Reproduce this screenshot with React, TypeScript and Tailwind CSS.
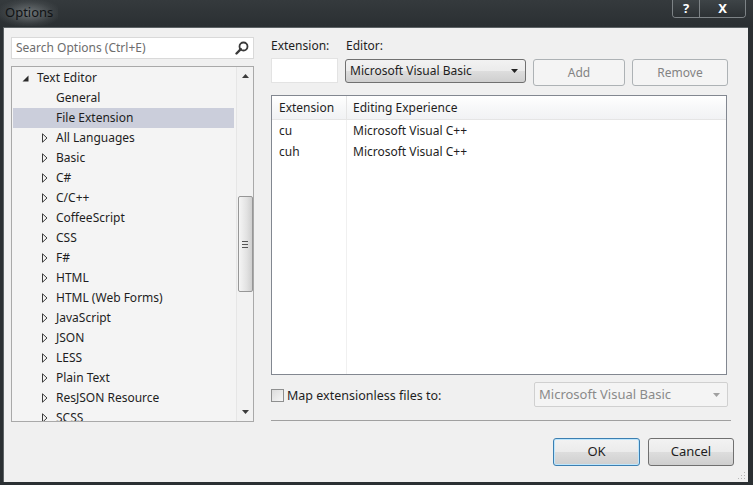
import React from 'react';

const treeItems = [
  'All Languages',
  'Basic',
  'C#',
  'C/C++',
  'CoffeeScript',
  'CSS',
  'F#',
  'HTML',
  'HTML (Web Forms)',
  'JavaScript',
  'JSON',
  'LESS',
  'Plain Text',
  'ResJSON Resource',
  'SCSS',
];

const mappings = [
  { ext: 'cu', editor: 'Microsoft Visual C++' },
  { ext: 'cuh', editor: 'Microsoft Visual C++' },
];

const Collapsed = () => (
  <svg width="6" height="10" viewBox="0 0 6 10" className="shrink-0">
    <path d="M0.5 0.8 L5 5 L0.5 9.2 Z" fill="none" stroke="#3c3c3c" strokeWidth="1" />
  </svg>
);

const Expanded = () => (
  <svg width="7" height="7" viewBox="0 0 7 7" className="shrink-0">
    <path d="M6.5 0.5 L6.5 6.5 L0.5 6.5 Z" fill="#2a2a2a" />
  </svg>
);

const ComboArrow = ({ color = '#222' }: { color?: string }) => (
  <svg width="7" height="4" viewBox="0 0 7 4">
    <path d="M0 0 L7 0 L3.5 4 Z" fill={color} />
  </svg>
);

const OptionsDialog: React.FC = () => {
  return (
    <div className="w-[753px] h-[485px] flex flex-col bg-[#2b3033] font-['Segoe_UI','Noto_Sans',sans-serif] text-[12px] text-[#1e1e1e] overflow-hidden">
      {/* title bar */}
      <div className="h-[27px] flex items-start justify-between shrink-0 bg-[linear-gradient(180deg,#353a3d,#2a2f32)]">
        <div className="h-[26px] px-[5px] flex items-center bg-[radial-gradient(ellipse_at_center,rgba(190,196,198,0.45),rgba(120,125,128,0.15)_60%,transparent_80%)]">
          <span className="text-[13px] text-[#101214]">Options</span>
        </div>
        <div className="flex mr-[7px] h-[18px] border border-t-0 border-[#7d8386] rounded-b-[4px] overflow-hidden">
          <div className="w-[27px] flex items-center justify-center border-r border-[#7d8386] bg-[linear-gradient(180deg,#3e4447,#2c3134)] text-white font-bold text-[13px] leading-none">
            ?
          </div>
          <div className="w-[45px] flex items-center justify-center bg-[linear-gradient(180deg,#3e4447,#2c3134)] text-white font-bold text-[13px] leading-none">
            X
          </div>
        </div>
      </div>

      {/* client area */}
      <div className="flex-1 ml-[3px] mr-[5px] mb-[3px] bg-[#f0f0f0] border-t border-l border-[#5d6366] relative flex">
        {/* left column */}
        <div className="w-[243px] ml-[7px] mt-[9px] flex flex-col">
          <div className="h-[22px] bg-white border border-[#d9d9d9] flex items-center pl-[4px] pr-[4px]">
            <span className="flex-1 text-[#6d6d6d]">Search Options (Ctrl+E)</span>
            <svg width="14" height="14" viewBox="0 0 14 14">
              <circle cx="8.5" cy="5.5" r="4" fill="none" stroke="#3a3a3a" strokeWidth="1.8" />
              <path d="M5.8 8.2 L1.5 12.5" stroke="#3a3a3a" strokeWidth="2.4" strokeLinecap="round" />
            </svg>
          </div>
          <div className="mt-[7px] h-[356px] border border-[#a9a9a9] bg-[#f4f4f4] flex overflow-hidden">
            <div className="flex-1 overflow-hidden pt-[1px] pl-[1px]">
              <div className="h-[20px] flex items-center pl-[9px] gap-[8px]">
                <Expanded />
                <span>Text Editor</span>
              </div>
              <div className="h-[20px] flex items-center pl-[43px]">General</div>
              <div className="h-[20px] flex items-center pl-[43px] mr-[2px] bg-[#cbcedb]">File Extension</div>
              {treeItems.map((item) => (
                <div key={item} className="h-[20px] flex items-center pl-[29px] gap-[8px]">
                  <Collapsed />
                  <span>{item}</span>
                </div>
              ))}
            </div>
            {/* scrollbar */}
            <div className="w-[17px] border-l border-[#e6e6e6] bg-[#f2f2f2] flex flex-col items-center">
              <div className="h-[18px] flex items-center justify-center">
                <svg width="7" height="4" viewBox="0 0 7 4">
                  <path d="M0 4 L7 4 L3.5 0 Z" fill="#3c3c3c" />
                </svg>
              </div>
              <div className="mt-[111px] w-[15px] h-[96px] border border-[#979797] rounded-[2px] bg-[linear-gradient(90deg,#f5f5f5,#e2e2e2_60%,#cfcfcf)] flex items-center justify-center">
                <div className="flex flex-col gap-[2px]">
                  <div className="w-[6px] h-[1px] bg-[#555]" />
                  <div className="w-[6px] h-[1px] bg-[#555]" />
                  <div className="w-[6px] h-[1px] bg-[#555]" />
                </div>
              </div>
              <div className="flex-1" />
              <div className="h-[18px] flex items-center justify-center">
                <ComboArrow color="#3c3c3c" />
              </div>
            </div>
          </div>
        </div>

        {/* right column */}
        <div className="ml-[17px] mt-[9px] w-[463px] flex flex-col">
          <div className="flex h-[18px] items-center">
            <span className="w-[75px]">Extension:</span>
            <span>Editor:</span>
          </div>
          <div className="flex mt-[3px] items-start">
            <div className="w-[67px] h-[25px] bg-white border border-[#e3e3e3]" />
            <div className="ml-[7px] mt-[1px] w-[181px] h-[24px] border border-[#707070] rounded-[3px] bg-[linear-gradient(180deg,#f2f2f2,#ebebeb_50%,#dddddd_51%,#cfcfcf)] flex items-center pl-[4px] pr-[7px]">
              <span className="flex-1">Microsoft Visual Basic</span>
              <ComboArrow />
            </div>
            <div className="ml-[7px] mt-[1px] w-[92px] h-[27px] border border-[#adb2b5] rounded-[3px] bg-[#f4f4f4] flex items-center justify-center text-[#838383]">
              Add
            </div>
            <div className="ml-[7px] mt-[1px] w-[96px] h-[27px] border border-[#adb2b5] rounded-[3px] bg-[#f4f4f4] flex items-center justify-center text-[#838383]">
              Remove
            </div>
          </div>

          {/* list */}
          <div className="mt-[9px] w-[456px] h-[280px] border border-[#828790] bg-white flex flex-col">
            <div className="h-[24px] flex bg-[linear-gradient(180deg,#ffffff,#f7f8f9_50%,#f1f2f4)] border-b border-[#e5e5e5]">
              <div className="w-[75px] pl-[7px] flex items-center border-r border-[#e5e5e5]">Extension</div>
              <div className="pl-[6px] flex items-center">Editing Experience</div>
            </div>
            <div className="flex-1 flex">
              <div className="w-[75px] border-r border-[#f0f0f0]">
                {mappings.map((m) => (
                  <div key={m.ext} className="h-[21px] flex items-center pl-[7px]">
                    {m.ext}
                  </div>
                ))}
              </div>
              <div className="flex-1">
                {mappings.map((m) => (
                  <div key={m.ext} className="h-[21px] flex items-center pl-[6px]">
                    {m.editor}
                  </div>
                ))}
              </div>
            </div>
          </div>

          {/* map extensionless */}
          <div className="mt-[7px] flex items-center h-[25px]">
            <div className="w-[13px] h-[13px] border border-[#8e8f8f] bg-[linear-gradient(135deg,#dcdcdc,#f6f6f6)] mt-[2px]" />
            <span className="ml-[3px] text-[12.5px] mt-[3px]">Map extensionless files to:</span>
            <div className="flex-1" />
            <div className="mr-[6px] w-[194px] h-[25px] border border-[#d0d0d0] rounded-[2px] bg-[#f4f4f4] flex items-center pl-[4px] pr-[7px] text-[#8a8a8a] text-[13px]">
              <span className="flex-1">Microsoft Visual Basic</span>
              <ComboArrow color="#a0a0a0" />
            </div>
          </div>

          <div className="mt-[13px] w-[460px] h-px bg-[#a0a0a0]" />

          <div className="mt-[17px] flex justify-end gap-[8px]">
            <div className="w-[87px] h-[28px] border border-[#3c7fb1] rounded-[3px] bg-[linear-gradient(180deg,#f2f2f2,#ebebeb_50%,#dddddd_51%,#cfcfcf)] shadow-[inset_0_0_0_1px_#bde6fd] flex items-center justify-center text-[13px]">
              OK
            </div>
            <div className="w-[86px] h-[28px] border border-[#707070] rounded-[3px] bg-[linear-gradient(180deg,#f2f2f2,#ebebeb_50%,#dddddd_51%,#cfcfcf)] flex items-center justify-center text-[13px]">
              Cancel
            </div>
          </div>
        </div>

        {/* size grip */}
        <svg className="absolute right-[2px] bottom-[2px]" width="8" height="8" viewBox="0 0 8 8">
          <rect x="6" y="0" width="1" height="1" fill="#b5b5b5" />
          <rect x="3" y="3" width="1" height="1" fill="#b5b5b5" />
          <rect x="6" y="3" width="1" height="1" fill="#b5b5b5" />
          <rect x="0" y="6" width="1" height="1" fill="#b5b5b5" />
          <rect x="3" y="6" width="1" height="1" fill="#b5b5b5" />
          <rect x="6" y="6" width="1" height="1" fill="#b5b5b5" />
        </svg>
      </div>
    </div>
  );
};

export default function App() {
  return <OptionsDialog />;
}
